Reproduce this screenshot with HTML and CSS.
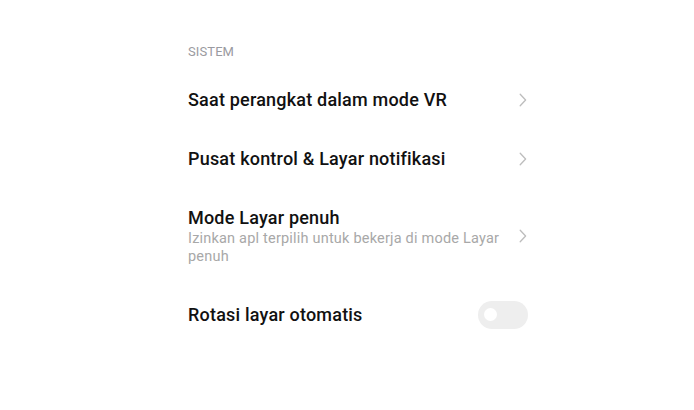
FILE: index.html
```html
<!DOCTYPE html>
<html lang="id">
<head>
<meta charset="utf-8">
<title>Sistem</title>
<link rel="stylesheet" href="styles.css">
</head>
<body>
<main class="page">
  <div class="section-title">SISTEM</div>
  <div class="row">
    <div class="texts"><div class="title">Saat perangkat dalam mode VR</div></div>
    <svg class="chev" width="8" height="14" viewBox="0 0 8 14"><path d="M1.2 1.2 L6.6 7 L1.2 12.8" fill="none" stroke="#bdbdbd" stroke-width="1.3" stroke-linecap="round" stroke-linejoin="round"/></svg>
  </div>
  <div class="row">
    <div class="texts"><div class="title">Pusat kontrol &amp; Layar notifikasi</div></div>
    <svg class="chev" width="8" height="14" viewBox="0 0 8 14"><path d="M1.2 1.2 L6.6 7 L1.2 12.8" fill="none" stroke="#bdbdbd" stroke-width="1.3" stroke-linecap="round" stroke-linejoin="round"/></svg>
  </div>
  <div class="row">
    <div class="texts">
      <div class="title">Mode Layar penuh</div>
      <div class="sub">Izinkan apl terpilih untuk bekerja di mode Layar penuh</div>
    </div>
    <svg class="chev" width="8" height="14" viewBox="0 0 8 14"><path d="M1.2 1.2 L6.6 7 L1.2 12.8" fill="none" stroke="#bdbdbd" stroke-width="1.3" stroke-linecap="round" stroke-linejoin="round"/></svg>
  </div>
  <div class="row">
    <div class="texts"><div class="title">Rotasi layar otomatis</div></div>
    <div class="toggle"><div class="knob"></div></div>
  </div>
</main>
</body>
</html>
```
FILE: styles.css
```css
html, body {
  margin: 0;
  padding: 0;
  background: #ffffff;
}
body {
  font-family: Roboto, "Noto Sans", "Liberation Sans", sans-serif;
  width: 694px;
  height: 410px;
  overflow: hidden;
}
.page {
  box-sizing: border-box;
  padding: 43px 0 0 188px;
  width: 528px;
}
.section-title {
  font-size: 13px;
  line-height: 18px;
  color: #9a9aa0;
  letter-spacing: 0.1px;
  margin-bottom: 9px;
}
.row {
  display: flex;
  align-items: center;
  padding: 17.5px 0;
}
.texts {
  flex: 1;
  min-width: 0;
  padding-right: 18px;
}
.title {
  font-size: 18px;
  line-height: 24px;
  font-weight: 500;
  letter-spacing: 0.2px;
  color: #111111;
}
.sub {
  font-size: 14.5px;
  line-height: 18px;
  letter-spacing: 0.2px;
  color: #a8a8a8;
}
.chev {
  flex: none;
  margin-right: 1px;
}
.toggle {
  flex: none;
  width: 50px;
  height: 28px;
  border-radius: 14px;
  background: #eeeeee;
  display: flex;
  align-items: center;
  padding-left: 6px;
  box-sizing: border-box;
}
.knob {
  width: 13px;
  height: 13px;
  border-radius: 50%;
  background: #ffffff;
}
```
